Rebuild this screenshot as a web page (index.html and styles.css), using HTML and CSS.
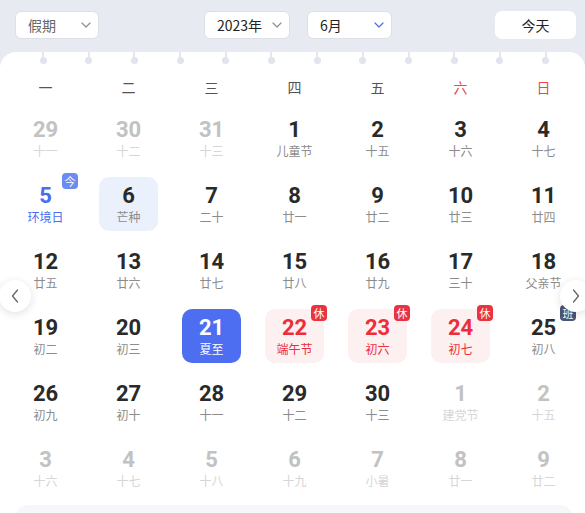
FILE: index.html
```html
<!DOCTYPE html>
<html lang="zh">
<head>
<meta charset="utf-8">
<link rel="stylesheet" href="styles.css">
</head>
<body>
<div class="toolbar">
  <div class="select sel-holiday"><span class="sel-text muted">假期</span><svg class="chev" viewBox="0 0 10 6"><path d="M1 1l4 4 4-4"/></svg></div>
  <div class="ym">
    <div class="select sel-year"><span class="sel-text">2023年</span><svg class="chev" viewBox="0 0 10 6"><path d="M1 1l4 4 4-4"/></svg></div>
    <div class="select sel-month"><span class="sel-text">6月</span><svg class="chev chev-blue" viewBox="0 0 10 6"><path d="M1 1l4 4 4-4"/></svg></div>
  </div>
  <div class="today-btn">今天</div>
</div>
<div class="card">
  <div class="rings">
    <i></i><i></i><i></i><i></i><i></i><i></i><i></i><i></i><i></i><i></i><i></i><i></i>
  </div>
  <div class="weekdays">
    <span>一</span><span>二</span><span>三</span><span>四</span><span>五</span><span class="we">六</span><span class="we">日</span>
  </div>
  <div class="grid">
    <div class="cell"><div class="day other"><b>29</b><small>十一</small></div></div>
    <div class="cell"><div class="day other"><b>30</b><small>十二</small></div></div>
    <div class="cell"><div class="day other"><b>31</b><small>十三</small></div></div>
    <div class="cell"><div class="day"><b>1</b><small>儿童节</small></div></div>
    <div class="cell"><div class="day"><b>2</b><small>十五</small></div></div>
    <div class="cell"><div class="day"><b>3</b><small>十六</small></div></div>
    <div class="cell"><div class="day"><b>4</b><small>十七</small></div></div>

    <div class="cell"><div class="day today"><b>5</b><small>环境日</small><span class="badge badge-today">今</span></div></div>
    <div class="cell"><div class="day hover"><b>6</b><small>芒种</small></div></div>
    <div class="cell"><div class="day"><b>7</b><small>二十</small></div></div>
    <div class="cell"><div class="day"><b>8</b><small>廿一</small></div></div>
    <div class="cell"><div class="day"><b>9</b><small>廿二</small></div></div>
    <div class="cell"><div class="day"><b>10</b><small>廿三</small></div></div>
    <div class="cell"><div class="day"><b>11</b><small>廿四</small></div></div>

    <div class="cell"><div class="day"><b>12</b><small>廿五</small></div></div>
    <div class="cell"><div class="day"><b>13</b><small>廿六</small></div></div>
    <div class="cell"><div class="day"><b>14</b><small>廿七</small></div></div>
    <div class="cell"><div class="day"><b>15</b><small>廿八</small></div></div>
    <div class="cell"><div class="day"><b>16</b><small>廿九</small></div></div>
    <div class="cell"><div class="day"><b>17</b><small>三十</small></div></div>
    <div class="cell"><div class="day"><b>18</b><small>父亲节</small></div></div>

    <div class="cell"><div class="day"><b>19</b><small>初二</small></div></div>
    <div class="cell"><div class="day"><b>20</b><small>初三</small></div></div>
    <div class="cell"><div class="day selected"><b>21</b><small>夏至</small></div></div>
    <div class="cell"><div class="day rest"><b>22</b><small>端午节</small><span class="badge badge-rest">休</span></div></div>
    <div class="cell"><div class="day rest"><b>23</b><small>初六</small><span class="badge badge-rest">休</span></div></div>
    <div class="cell"><div class="day rest"><b>24</b><small>初七</small><span class="badge badge-rest">休</span></div></div>
    <div class="cell"><div class="day"><b>25</b><small>初八</small><span class="badge badge-work">班</span></div></div>

    <div class="cell"><div class="day"><b>26</b><small>初九</small></div></div>
    <div class="cell"><div class="day"><b>27</b><small>初十</small></div></div>
    <div class="cell"><div class="day"><b>28</b><small>十一</small></div></div>
    <div class="cell"><div class="day"><b>29</b><small>十二</small></div></div>
    <div class="cell"><div class="day"><b>30</b><small>十三</small></div></div>
    <div class="cell"><div class="day other"><b>1</b><small>建党节</small></div></div>
    <div class="cell"><div class="day other"><b>2</b><small>十五</small></div></div>

    <div class="cell"><div class="day other"><b>3</b><small>十六</small></div></div>
    <div class="cell"><div class="day other"><b>4</b><small>十七</small></div></div>
    <div class="cell"><div class="day other"><b>5</b><small>十八</small></div></div>
    <div class="cell"><div class="day other"><b>6</b><small>十九</small></div></div>
    <div class="cell"><div class="day other"><b>7</b><small>小暑</small></div></div>
    <div class="cell"><div class="day other"><b>8</b><small>廿一</small></div></div>
    <div class="cell"><div class="day other"><b>9</b><small>廿二</small></div></div>
  </div>
  <div class="footer-panel"></div>
  <div class="nav nav-prev"><svg viewBox="0 0 8 14"><path d="M6.5 1L1.5 7l5 6"/></svg></div>
  <div class="nav nav-next"><svg viewBox="0 0 8 14"><path d="M1.5 1l5 6-5 6"/></svg></div>
</div>
</body>
</html>
```

FILE: styles.css
```css
* { box-sizing: border-box; }
html, body { margin: 0; padding: 0; }
body {
  background: #e8eaf2;
  font-family: "Noto Sans CJK SC", "Noto Sans", sans-serif;
  width: 585px;
  height: 513px;
  overflow: hidden;
}
.toolbar {
  height: 52px;
  display: flex;
  align-items: flex-start;
  padding: 11px 9px 0 15px;
}
.select {
  height: 28px;
  background: #fff;
  border: 1px solid #dcdfe6;
  border-radius: 6px;
  display: flex;
  align-items: center;
  justify-content: space-between;
  padding: 0 7px 0 12px;
  font-size: 14px;
  color: #222;
}
.sel-holiday { width: 84px; }
.sel-year { width: 86px; }
.sel-month { width: 85px; }
.sel-text { line-height: 20px; }
.muted { color: #666; }
.chev { width: 10px; height: 6px; }
.chev path { fill: none; stroke: #8a8f99; stroke-width: 1.2; stroke-linecap: round; stroke-linejoin: round; }
.chev-blue path { stroke: #4f6fe0; }
.ym { display: flex; gap: 17px; margin-left: 105px; }
.today-btn {
  margin-left: auto;
  width: 81px;
  height: 28px;
  background: #fff;
  border-radius: 7px;
  display: flex;
  align-items: center;
  justify-content: center;
  font-size: 14px;
  color: #222;
}
.card {
  position: relative;
  background: #fff;
  border-radius: 16px 16px 0 0;
  height: 461px;
}
.rings {
  display: flex;
  gap: 38.7px;
  padding-left: 39.5px;
  height: 12px;
}
.rings i {
  position: relative;
  width: 7px;
  height: 12px;
}
.rings i::before {
  content: "";
  position: absolute;
  left: 2.5px;
  top: 0;
  width: 2px;
  height: 6px;
  background: #e4e7ee;
}
.rings i::after {
  content: "";
  position: absolute;
  left: 0;
  top: 5px;
  width: 7px;
  height: 7px;
  border-radius: 50%;
  background: #e1e4ec;
}
.weekdays {
  display: grid;
  grid-template-columns: repeat(7, 1fr);
  padding: 4px 0 0 4px;
  height: 41px;
  align-items: center;
  font-size: 14px;
  color: #555;
  text-align: center;
}
.weekdays .we { color: #f04848; }
.grid {
  display: grid;
  grid-template-columns: repeat(7, 1fr);
  grid-auto-rows: 66px;
  padding-left: 4px;
}
.cell {
  display: flex;
  align-items: center;
  justify-content: center;
}
.day {
  position: relative;
  width: 59px;
  height: 54px;
  border-radius: 10px;
  display: flex;
  flex-direction: column;
  align-items: center;
  justify-content: center;
}
.day b {
  font-family: "Roboto", "DejaVu Sans", sans-serif;
  font-weight: 700;
  font-size: 22px;
  line-height: 26px;
  color: #2a2a2a;
}
.day small {
  font-size: 12px;
  line-height: 16px;
  color: #8c8c8c;
}
.day.other b { color: #c2c2c2; }
.day.other small { color: #d6d6d6; }
.day.today b, .day.today small { color: #4a6cf0; }
.day.hover { background: #ebf0fd; }
.day.selected { background: #4e6ef2; }
.day.selected b, .day.selected small { color: #fff; }
.day.rest { background: #fdf0f0; }
.day.rest b, .day.rest small { color: #ee2d3b; }
.badge {
  position: absolute;
  top: -4px;
  right: -3px;
  width: 16px;
  height: 16px;
  border-radius: 4px;
  color: #fff;
  font-size: 11px;
  line-height: 16px;
  text-align: center;
}
.badge-today { background: #6a8cf5; }
.badge-rest { background: #ea3340; }
.badge-work { background: #4b5474; }
.footer-panel {
  margin: 4px 13px 0 16px;
  height: 20px;
  background: #f6f7fa;
  border-radius: 12px 12px 0 0;
}
.nav {
  position: absolute;
  top: 228px;
  width: 32px;
  height: 32px;
  border-radius: 50%;
  background: #fff;
  box-shadow: 0 2px 8px rgba(0, 0, 0, 0.12);
  display: flex;
  align-items: center;
  justify-content: center;
}
.nav svg { width: 8px; height: 14px; }
.nav path { fill: none; stroke: #666; stroke-width: 1.3; stroke-linecap: round; stroke-linejoin: round; }
.nav-prev { left: -1px; }
.nav-next { left: 560px; }
```
